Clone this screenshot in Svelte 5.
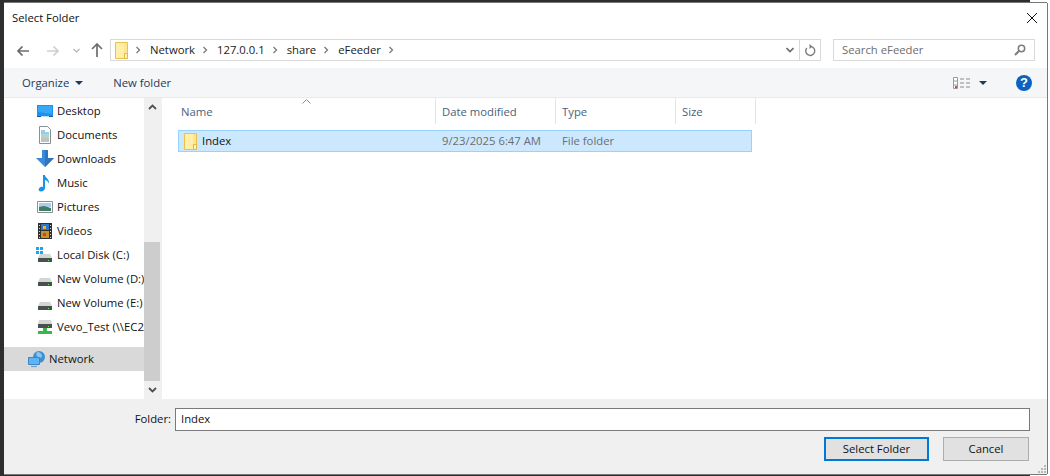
<script>
  const navItems = [
    { label: "Desktop", icon: "desktop" },
    { label: "Documents", icon: "documents" },
    { label: "Downloads", icon: "downloads" },
    { label: "Music", icon: "music" },
    { label: "Pictures", icon: "pictures" },
    { label: "Videos", icon: "videos" },
    { label: "Local Disk (C:)", icon: "system" },
    { label: "New Volume (D:)", icon: "disk" },
    { label: "New Volume (E:)", icon: "disk" },
    { label: "Vevo_Test (\\\\EC2AMAZ)", icon: "share" },
  ];
  const crumbs = ["Network", "127.0.0.1", "share", "eFeeder"];
</script>

{#snippet folder(w, h)}
  <svg width={w} height={h} viewBox="0 0 13 17">
    <path d="M.5.5h12v16H.5z" fill="#fde68f" stroke="#e8c14f" />
    <path d="M1 1h8v15H1z" fill="#ffefa8" />
    <path d="M9.500 11.500h3v5h-3z" fill="#fff3b8" stroke="#e4b93f" />
  </svg>
{/snippet}

{#snippet chevron()}
  <svg class="crumb-sep" width="6" height="8" viewBox="0 0 6 8">
    <path d="M1.500 1l3 3-3 3" fill="none" stroke="#7a7a7a" stroke-width="1.300" />
  </svg>
{/snippet}

{#snippet navIcon(name)}
  <svg width="18" height="18" viewBox="0 0 18 18">
    {#if name === "desktop"}
      <path d="M1 3h16v12H1z" fill="#1e90f0" />
      <path d="M2 4h14v8L2 10z" fill="#35a8f8" />
      <path d="M1 14h16v1H1z" fill="#0d5fae" />
      <path d="M5 14h8v1H5z" fill="#bfe0fb" />
    {:else if name === "documents"}
      <path d="M3.500.5h8l3 3v14h-11z" fill="#fff" stroke="#8a8f94" />
      <path d="M5 5h4M5 7h8" stroke="#3a94dc" stroke-width="1" />
      <path d="M5 9h8M5 11h8" stroke="#5fae9a" stroke-width="1" />
      <path d="M5 13h8M5 15h8" stroke="#7d8790" stroke-width="1" />
    {:else if name === "downloads"}
      <path d="M6 0h6v8h6l-9 9-9-9h6z" fill="#3d8ad8" />
      <path d="M9 0h3v8h6l-9 9z" fill="#2f74c0" />
    {:else if name === "music"}
      <path d="M7 1h2c0 3 5 4 4 9-.3-2-2-3.500-4-4v8c0 2-2 3.500-4 3.500S2 16 3 14.500 5.500 12.500 7 13z" fill="#1793e8" />
    {:else if name === "pictures"}
      <path d="M1.500 3.500h15v11h-15z" fill="#fff" stroke="#8a8f94" />
      <path d="M3 5h12v4H3z" fill="#a9cdea" />
      <path d="M3 9l5-1 7 2v3H3z" fill="#3f7d68" />
    {:else if name === "videos"}
      <path d="M2 1h14v16H2z" fill="#2f2f2f" />
      <path d="M5 2h8v6H5z" fill="#2f76c8" />
      <path d="M5 9h8v7H5z" fill="#c8902a" />
      <path d="M7 4h3v3H7z" fill="#e7b52e" />
      <path d="M7 11h3v3H7z" fill="#c74430" />
      <path d="M3 3h1v1H3zm0 3h1v1H3zm0 3h1v1H3zm0 3h1v1H3zm0 3h1v1H3zm11-12h1v1h-1zm0 3h1v1h-1zm0 3h1v1h-1zm0 3h1v1h-1zm0 3h1v1h-1z" fill="#ddd" />
    {:else if name === "share"}
      <path d="M3 2h12l1 4H2z" fill="#d4d6d6" />
      <path d="M2 6h14v4H2z" fill="#4a4f4f" />
      <path d="M12 8h1v1h-1z" fill="#5fe05f" />
      <path d="M7 10h4v3h5v3H2v-3h5z" fill="#3cb54a" />
    {:else}
      {#if name === "system"}
        <path d="M0 1h3v3H0zm4 0h3v3H4zM0 5h3v3H0zm4 0h3v3H4z" fill="#18a8f0" />
      {/if}
      <path d="M4 8h10l2 4H2z" fill="#d4d6d6" />
      <path d="M2 12h14v4H2z" fill="#4a4f4f" />
      <path d="M12 14h1v1h-1z" fill="#5fe05f" />
    {/if}
  </svg>
{/snippet}

<div class="dialog">
  <header class="titlebar">
    <span class="title">Select Folder</span>
    <svg class="close" width="10" height="10" viewBox="0 0 10 10">
      <path d="M0 0l10 10M10 0L0 10" stroke="#111" stroke-width="1" fill="none" />
    </svg>
  </header>

  <div class="navbar">
    <svg class="nav-btn" width="12" height="10" viewBox="0 0 12 10">
      <path d="M5.500.5L1 5l4.500 4.500M1.500 5H12" fill="none" stroke="#6d6d6d" stroke-width="1.700" />
    </svg>
    <svg class="nav-btn forward" width="12" height="10" viewBox="0 0 12 10">
      <path d="M6.500.5L11 5 6.500 9.500M10.500 5H0" fill="none" stroke="#d0d0d0" stroke-width="1.700" />
    </svg>
    <svg class="nav-btn recent" width="7" height="5" viewBox="0 0 7 5">
      <path d="M.5 1l3 3 3-3" fill="none" stroke="#b4b4b4" stroke-width="1.200" />
    </svg>
    <svg class="nav-btn up" width="12" height="14" viewBox="0 0 12 14">
      <path d="M1 6l5-5 5 5M6 1.500V14" fill="none" stroke="#6d6d6d" stroke-width="1.700" />
    </svg>
    <div class="address">
      <span class="address-icon">{@render folder(13, 17)}</span>
      {#each crumbs as crumb}
        {@render chevron()}
        <span class="crumb">{crumb}</span>
      {/each}
      {@render chevron()}
      <span class="address-spacer"></span>
      <svg class="addr-down" width="8" height="6" viewBox="0 0 8 6">
        <path d="M.5 1L4 4.500 7.500 1" fill="none" stroke="#6d6d6d" stroke-width="1.600" />
      </svg>
      <span class="refresh">
        <svg width="12" height="13" viewBox="0 0 12 13">
          <path d="M7.500 2.600A4.500 4.500 0 1 1 2.800 4" fill="none" stroke="#7d7d7d" stroke-width="1.400" />
          <path d="M5.500 0l3 2.500-3 2.500z" fill="#7d7d7d" />
        </svg>
      </span>
    </div>
    <div class="search">
      <span class="search-text">Search eFeeder</span>
      <svg width="12" height="12" viewBox="0 0 12 12">
        <circle cx="7.500" cy="4.500" r="3.200" fill="none" stroke="#7d7d7d" stroke-width="1.500" />
        <path d="M5 7l-4 4" stroke="#7d7d7d" stroke-width="2" />
      </svg>
    </div>
  </div>

  <div class="toolbar">
    <span class="tool">Organize</span>
    <span class="caret"></span>
    <span class="tool new-folder">New folder</span>
    <span class="toolbar-spacer"></span>
    <svg class="views" width="17" height="12" viewBox="0 0 17 12">
      <path d="M.5.500h4v11h-4zM.5 4h4M.5 8h4" fill="#fff" stroke="#9a9a9a" />
      <path d="M2 9h2v2H2z" fill="#c0504d" />
      <path d="M7 2h4M13 2h4M7 6h4M13 6h4M7 10h4M13 10h4" stroke="#8a8a8a" />
    </svg>
    <span class="caret views-caret"></span>
    <span class="help">?</span>
  </div>

  <div class="main">
    <nav class="sidebar">
      <ul>
        {#each navItems as item}
          <li class="nav-row">
            <span class="nav-icon">{@render navIcon(item.icon)}</span>
            <span class="nav-label">{item.label}</span>
          </li>
        {/each}
      </ul>
      <div class="nav-row network">
        <svg class="network-icon" width="18" height="17" viewBox="0 0 18 17">
          <circle cx="11" cy="6" r="6" fill="#3f8fd4" />
          <path d="M9 1c3 0 5 2 5 4s-2 2-4 1-2-3-1-5z" fill="#8cc4ee" />
          <path d="M.5 6.500h11v7H.5z" fill="#5cb4f4" stroke="#3a86c8" />
          <path d="M3 15.500h6" stroke="#7a9cc0" stroke-width="1.200" />
        </svg>
        <span class="nav-label">Network</span>
      </div>
    </nav>

    <div class="scrollbar">
      <svg class="sb-arrow" width="9" height="6" viewBox="0 0 9 6">
        <path d="M1 5l3.500-3.500L8 5" fill="none" stroke="#505050" stroke-width="1.800" />
      </svg>
      <div class="sb-track"><div class="sb-thumb"></div></div>
      <svg class="sb-arrow" width="9" height="6" viewBox="0 0 9 6">
        <path d="M1 1l3.500 3.500L8 1" fill="none" stroke="#505050" stroke-width="1.800" />
      </svg>
    </div>

    <section class="files">
      <svg class="sort-arrow" width="9" height="5" viewBox="0 0 9 5">
        <path d="M.5 4.500l4-4 4 4" fill="none" stroke="#8a8f96" />
      </svg>
      <div class="file-header">
        <span class="col col-name">Name</span>
        <span class="col col-date">Date modified</span>
        <span class="col col-type">Type</span>
        <span class="col col-size">Size</span>
      </div>
      <div class="file-row">
        <span class="file-name">
          {@render folder(13, 17)}
          <span class="file-label">Index</span>
        </span>
        <span class="file-date">9/23/2025 6:47 AM</span>
        <span class="file-type">File folder</span>
      </div>
    </section>
  </div>

  <footer class="footer">
    <div class="folder-line">
      <label class="folder-label" for="folder-input">Folder:</label>
      <input id="folder-input" class="folder-input" value="Index" />
    </div>
    <div class="buttons">
      <button class="btn primary">Select Folder</button>
      <button class="btn">Cancel</button>
    </div>
    <svg class="grip" width="8" height="8" viewBox="0 0 8 8">
      <path d="M6 0h2v2H6zM3 3h2v2H3zM6 3h2v2H6zM0 6h2v2H0zM3 6h2v2H3zM6 6h2v2H6z" fill="#b8b8b8" />
    </svg>
  </footer>
</div>

<style>
  :global(body) {
    background: linear-gradient(to right, #2e2e2e 1030px, #fff 1030px);
    overflow: hidden;
  }

  .dialog {
    width: 1043px;
    height: 471px;
    margin: 3px 0 2px 4px;
    background: #fff;
    box-shadow: 1px 0 0 #777, 0 -1px 0 #777, 0 1px 0 #777;
    display: flex;
    flex-direction: column;
    font-family: "Open Sans", "Liberation Sans", sans-serif;
    font-size: 11.3px;
    color: #111;
  }

  .titlebar {
    height: 29px;
    flex: none;
    display: flex;
    align-items: center;
    justify-content: space-between;
    padding: 0 10px 0 8px;
    box-sizing: border-box;
  }

  .navbar {
    height: 36px;
    flex: none;
    display: flex;
    align-items: flex-start;
    padding-top: 7px;
    box-sizing: border-box;
  }

  .nav-btn {
    flex: none;
    margin-top: 7px;
    margin-left: 13px;
  }

  .nav-btn.forward {
    margin-left: 18px;
  }

  .nav-btn.recent {
    margin-left: 14px;
    margin-top: 9px;
  }

  .nav-btn.up {
    margin-left: 11px;
    margin-top: 4px;
  }

  .address {
    width: 711px;
    height: 22px;
    margin-left: 7px;
    border: 1px solid #d9d9d9;
    box-sizing: border-box;
    display: flex;
    align-items: center;
  }

  .address-icon {
    display: flex;
    margin-left: 4px;
  }

  .crumb-sep {
    margin: 0 9px 0 7px;
    flex: none;
  }

  .crumb,
  .search-text,
  .nav-label,
  .file-label,
  .file-date,
  .file-type {
    margin-bottom: 2px;
  }

  .crumb {
    color: #1a1a1a;
  }

  .address-spacer {
    flex: 1;
  }

  .addr-down {
    margin-right: 5px;
  }

  .refresh {
    width: 20px;
    height: 20px;
    border-left: 1px solid #d9d9d9;
    display: flex;
    align-items: center;
    justify-content: center;
  }

  .search {
    width: 202px;
    height: 22px;
    margin-left: 12px;
    padding: 0 8px 0 8px;
    border: 1px solid #d9d9d9;
    box-sizing: border-box;
    display: flex;
    align-items: center;
    justify-content: space-between;
    color: #6d6d6d;
  }

  .toolbar {
    height: 30px;
    flex: none;
    display: flex;
    align-items: center;
    background: #f5f6f7;
    border-bottom: 1px solid #e8eaec;
    box-sizing: border-box;
    padding-left: 18px;
    color: #1e3a5f;
  }

  .caret {
    width: 0;
    height: 0;
    margin-left: 6px;
    border-left: 4px solid transparent;
    border-right: 4px solid transparent;
    border-top: 4px solid #1e3a5f;
  }

  .new-folder {
    margin-left: 30px;
  }

  .toolbar-spacer {
    flex: 1;
  }

  .views-caret {
    margin-left: 9px;
  }

  .help {
    width: 16px;
    height: 16px;
    margin: 0 15px 0 29px;
    border-radius: 50%;
    background: #0a63c0;
    color: #fff;
    font-family: "Liberation Sans", sans-serif;
    font-size: 13px;
    font-weight: 700;
    line-height: 16px;
    text-align: center;
  }

  .main {
    flex: 1;
    display: flex;
    min-height: 0;
  }

  .sidebar {
    width: 140px;
    flex: none;
    overflow: hidden;
    padding-top: 1px;
    box-sizing: border-box;
  }

  .sidebar ul {
    list-style: none;
    margin: 0 0 8px;
    padding: 0;
  }

  .nav-row {
    height: 24px;
    display: flex;
    align-items: center;
    padding-left: 32px;
    white-space: nowrap;
  }

  .nav-icon {
    display: flex;
    width: 21px;
    flex: none;
  }

  .network {
    padding-left: 24px;
    background: #d9d9d9;
  }

  .network-icon {
    flex: none;
    margin-right: 3px;
  }

  .scrollbar {
    width: 16px;
    flex: none;
    background: #f0f0f0;
    display: flex;
    flex-direction: column;
    align-items: center;
  }

  .sb-arrow {
    flex: none;
    margin: 6px 0;
  }

  .sb-track {
    flex: 1;
    width: 100%;
    display: flex;
    flex-direction: column;
    justify-content: flex-end;
  }

  .sb-thumb {
    height: 139px;
    background: #cdcdcd;
  }

  .files {
    flex: 1;
    position: relative;
    border-left: 2px solid #f0f0f0;
  }

  .sort-arrow {
    position: absolute;
    left: 140px;
    top: 1px;
  }

  .file-header {
    height: 26px;
    display: flex;
    color: #4c607a;
  }

  .col {
    height: 100%;
    padding-left: 7px;
    box-sizing: border-box;
    border-right: 1px solid #e5e5e5;
    display: flex;
    align-items: center;
  }

  .col-name {
    width: 274px;
    padding-left: 19px;
  }

  .col-date,
  .col-type,
  .col-size {
    width: 120px;
    padding-left: 6px;
  }

  .col-size {
    width: 80px;
  }

  .file-row {
    width: 574px;
    height: 22px;
    margin: 6px 0 0 16px;
    background: #cce8ff;
    border: 1px solid #99d1ff;
    box-sizing: border-box;
    display: flex;
    align-items: center;
  }

  .file-name {
    width: 263px;
    padding-left: 5px;
    box-sizing: border-box;
    display: flex;
    align-items: center;
  }

  .file-label {
    margin-left: 5px;
    color: #111;
  }

  .file-date {
    width: 120px;
    color: #6d6d6d;
  }

  .file-type {
    color: #6d6d6d;
  }

  .footer {
    height: 75px;
    flex: none;
    position: relative;
    background: #f0f0f0;
    box-sizing: border-box;
    padding-top: 9px;
  }

  .folder-line {
    display: flex;
    align-items: center;
    padding: 0 17px 0 130px;
  }

  .folder-label {
    width: 37px;
    margin-right: 4px;
    margin-bottom: 2px;
    text-align: right;
  }

  .folder-input {
    flex: 1;
    height: 23px;
    padding: 0 5px 2px;
    border: 1px solid #7a7a7a;
    border-radius: 0;
    outline: none;
    box-sizing: border-box;
    background: #fff;
    font: inherit;
    color: #111;
  }

  .buttons {
    display: flex;
    justify-content: flex-end;
    gap: 14px;
    padding-right: 18px;
    margin-top: 6px;
  }

  .btn {
    width: 86px;
    height: 24px;
    padding: 0 0 2px;
    border: 1px solid #adadad;
    border-radius: 0;
    background: #e1e1e1;
    font: inherit;
    color: #111;
  }

  .btn.primary {
    width: 105px;
    border: 2px solid #0078d7;
  }

  .grip {
    position: absolute;
    right: 1px;
    bottom: 1px;
  }
</style>
